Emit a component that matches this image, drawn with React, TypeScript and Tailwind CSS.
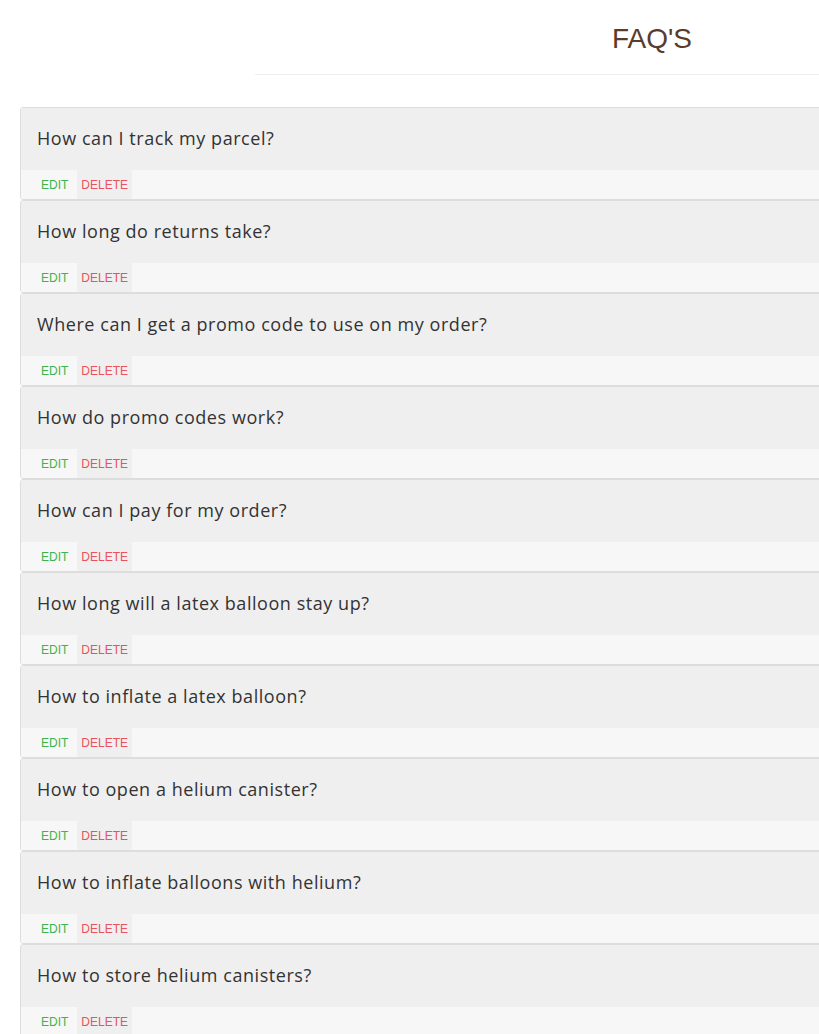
import React from "react";

const FAQS = [
  "How can I track my parcel?",
  "How long do returns take?",
  "Where can I get a promo code to use on my order?",
  "How do promo codes work?",
  "How can I pay for my order?",
  "How long will a latex balloon stay up?",
  "How to inflate a latex balloon?",
  "How to open a helium canister?",
  "How to inflate balloons with helium?",
  "How to store helium canisters?",
];

const FaqCard = ({ question }: { question: string }) => (
  <div className="border border-[#dddddd] rounded-[3px] overflow-hidden">
    <div className="bg-[#efefef] h-[62px] flex items-center px-4 pb-[1px] text-[18px] tracking-[0.55px] text-[#333333] font-['Open_Sans',sans-serif]">
      {question}
    </div>
    <div className="bg-[#f7f7f7] h-[29px] flex items-stretch pl-[16px] text-[12px]">
      <button className="px-1 text-[#3cb44b] leading-none">EDIT</button>
      <button className="px-1 bg-[#efefef] text-[#e9525e] leading-none rounded-[2px] ml-[5px]">DELETE</button>
    </div>
  </div>
);

export default function App() {
  return (
    <div className="w-[819px] h-[1034px] overflow-hidden bg-white font-['Liberation_Sans',sans-serif]">
      <div className="w-[1100px]">
        <div className="ml-[255px] w-[794px] border-b border-[#eeeeee] h-[75px] flex items-center justify-center">
          <h1 className="text-[28px] text-[#5b3b2b] font-normal mt-[4px]">FAQ'S</h1>
        </div>
        <div className="ml-[20px] mt-[32px] w-[1000px] flex flex-col">
          {FAQS.map((q) => (
            <FaqCard key={q} question={q} />
          ))}
        </div>
      </div>
    </div>
  );
}
